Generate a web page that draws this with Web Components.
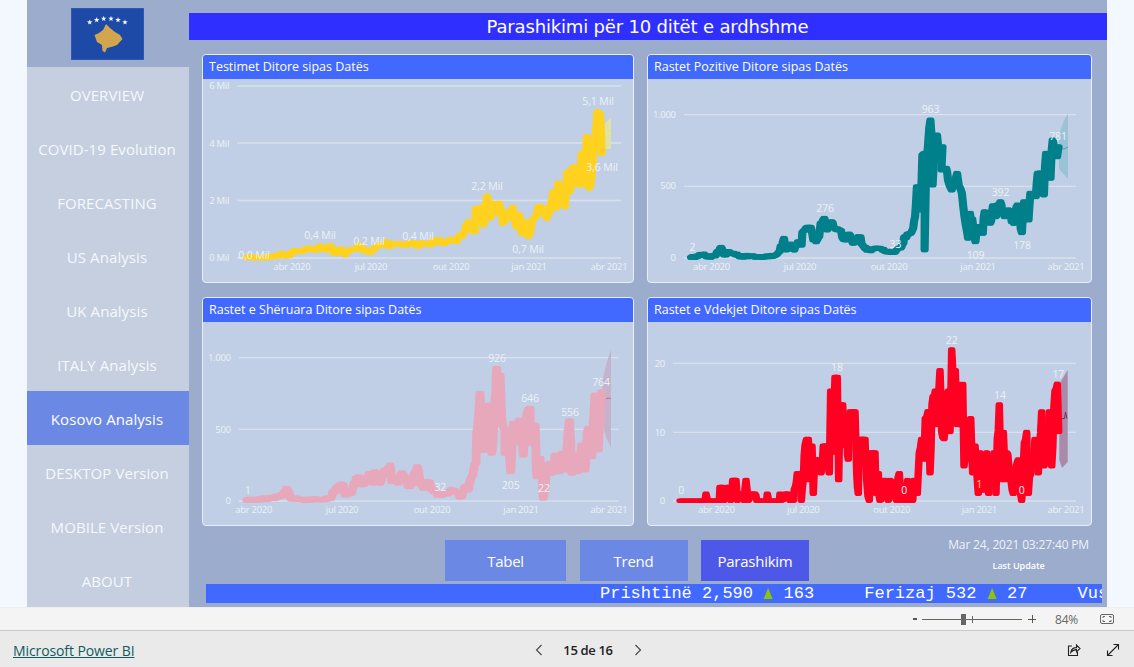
<!DOCTYPE html>
<html lang="sq">
<head>
<meta charset="utf-8">
<title>Parashikimi</title>
<style>
html,body{margin:0;padding:0;width:1134px;height:667px;overflow:hidden;background:#f3f7fe;font-family:"Open Sans","Liberation Sans",sans-serif}
</style>
</head>
<body>
<pbi-viewer>
  <report-page>
    <side-nav>
      <nav-item>OVERVIEW</nav-item>
      <nav-item>COVID-19 Evolution</nav-item>
      <nav-item>FORECASTING</nav-item>
      <nav-item>US Analysis</nav-item>
      <nav-item>UK Analysis</nav-item>
      <nav-item>ITALY Analysis</nav-item>
      <nav-item active>Kosovo Analysis</nav-item>
      <nav-item>DESKTOP Version</nav-item>
      <nav-item>MOBILE Version</nav-item>
      <nav-item>ABOUT</nav-item>
    </side-nav>
    <main-panel>
      <title-bar>Parashikimi për 10 ditët e ardhshme</title-bar>
      <chart-grid>
        <chart-card key="tests">Testimet Ditore sipas Datës</chart-card>
        <chart-card key="pos">Rastet Pozitive Ditore sipas Datës</chart-card>
        <chart-card key="rec">Rastet e Shëruara Ditore sipas Datës</chart-card>
        <chart-card key="dead">Rastet e Vdekjet Ditore sipas Datës</chart-card>
      </chart-grid>
      <action-row>
        <tab-button w="121">Tabel</tab-button>
        <tab-button w="108">Trend</tab-button>
        <tab-button w="108" active>Parashikim</tab-button>
      </action-row>
      <ticker-bar></ticker-bar>
    </main-panel>
  </report-page>
  <zoom-bar></zoom-bar>
  <page-bar></page-bar>
</pbi-viewer>
<script>
function def(name, css, html, setup){
  customElements.define(name, class extends HTMLElement{
    connectedCallback(){
      if(this.shadowRoot) return;
      const r=this.attachShadow({mode:'open'});
      r.innerHTML='<style>'+css+'</style>'+html;
      if(setup) setup.call(this,r);
    }
  });
}
const UI='"Open Sans","Liberation Sans",sans-serif';

def('pbi-viewer',':host{display:flex;flex-direction:column;width:1134px;height:667px}','<slot></slot>');
def('report-page',':host{display:flex;width:1080px;height:607px;margin:0 27px;background:#9bacCC}','<slot></slot>');

def('side-nav',`:host{display:flex;flex-direction:column;width:162px;flex:none}
.logo{height:67px;display:flex;justify-content:center;align-items:flex-start;padding-top:8px;box-sizing:border-box}
.items{flex:1;background:#c5cfe0;display:flex;flex-direction:column}
svg{display:block;margin-right:1px}`,
`<div class="logo"><svg width="73" height="52" viewBox="71 8 73 52">
<rect x="71" y="8" width="73" height="52" fill="#1c4aa6" stroke="#3e66b4" stroke-width="1"/>
<polygon fill="#d2a64f" points="94.5,35 99,33 103,30 106,24 110,28 115,32 120,35 122.500,39 117,45 113,46.500 107,48 105,52.500 102.500,51 102,45 97,42"/>
<g id="stars" fill="#f4f6fb"></g></svg></div>
<div class="items"><slot></slot></div>`,
function(r){
  const g=r.getElementById('stars');let s='';
  [[89.7,22.3],[96.7,20],[103.7,18.7],[111,18.7],[118,20],[125,22.3]].forEach(([x,y])=>{
    let p=[];for(let i=0;i<10;i++){const a=-Math.PI/2+i*Math.PI/5,q=i%2?1.2:2.9;p.push((x+q*Math.cos(a)).toFixed(1)+','+(y+q*Math.sin(a)).toFixed(1));}
    s+='<polygon points="'+p.join(' ')+'"/>';
  });
  g.innerHTML=s;
});

def('nav-item',`:host{display:flex;height:54px;align-items:center;justify-content:center;color:#f6f8fc;font:15px ${UI};letter-spacing:.08px;padding:2px 2px 0 0;box-sizing:border-box}
:host([active]){background:#6b88e4;color:#fff}`,'<slot></slot>');

def('main-panel',':host{display:flex;flex-direction:column;flex:1;min-width:0;padding-top:13px;box-sizing:border-box}','<slot></slot>');

def('title-bar',`:host{display:flex;height:27px;align-items:center;justify-content:center;background:#2f2fff;color:#fff;
font:18px "DejaVu Sans",sans-serif;letter-spacing:-.17px;padding-right:1px;box-sizing:border-box}`,'<slot></slot>');

def('chart-grid',`:host{display:grid;grid-template-columns:432px 445px;grid-template-rows:229px 229px;gap:14px 13px;margin:14px 0 0 13px}`,'<slot></slot>');

const SERIES={
 tests:{box:[202,54,432,229],grid:[[237,621],[86,143,200.5,258]],
  yl:[[229,'6 Mil',86],[229,'4 Mil',143.500],[229,'2 Mil',200.500],[229,'0 Mil',257.500]],
  xl:[[292,'abr 2020'],[371,'jul 2020'],[451,'out 2020'],[529,'jan 2021'],[609,'abr 2021']],xy:267,
  dl:[[254,255,'0,0 Mil'],[320,235.500,'0,4 Mil'],[369,241.500,'0,2 Mil'],[418,236.500,'0,4 Mil'],[487,186,'2,2 Mil'],[528,249.500,'0,7 Mil'],[598,101.500,'5,1 Mil'],[602,167,'3,6 Mil']],
  color:'#ffd21f',w:5,noise:.7,slope:.3,fat:1.5,
  band:{pts:[[603,125],[611,118],[611,149],[603,149]],fill:'#dfe2a6'},line:{pts:[[603,135],[607,133.500],[611,133]],c:'#f3ef5a'},
  traces:[
   {o:[230,170],sx:3,sy:3,p:[[50,262],[120,262],[135,258],[155,250],[170,258],[190,243],[215,245],[235,235],[260,240],[270,228],[285,240],[300,228],[315,250],[335,238],[345,255],[360,240],[380,238],[388,225],[400,240],[415,247],[430,240],[440,228],[465,225],[470,215],[480,230],[495,222],[520,225],[545,218],[560,228],[580,218],[600,225]]},
   {o:[430,100],sx:3,sy:3,p:[[0,430],[25,420],[40,430],[60,418],[80,425],[85,410],[100,405],[105,390],[115,365],[125,390],[135,395],[137,325],[150,345],[155,320],[160,375],[172,288],[180,355],[190,310],[200,340],[208,310],[218,370],[230,335],[240,355],[248,322],[258,380],[268,345],[275,400],[285,365],[295,410],[305,365],[318,350],[325,320],[340,325],[350,355],[360,330],[370,275],[378,325],[385,250],[395,290],[405,320],[412,215],[420,275],[430,200],[445,255],[455,160],[462,255],[470,110],[478,265],[490,160],[497,95],[502,35],[510,40],[515,160]]}
  ]},
 pos:{box:[647,54,445,229],grid:[[684,1076],[114.700,186.300,258]],
  yl:[[675.700,'1.000',114.500],[675.700,'500',186],[675.700,'0',257.500]],
  xl:[[711.500,'abr 2020'],[800,'jul 2020'],[889,'out 2020'],[978,'jan 2021'],[1066,'abr 2021']],xy:267,
  dl:[[692.500,247.500,'2'],[825,208.500,'276'],[895.500,244,'33'],[930.500,109.500,'963'],[975.500,255.500,'109'],[1000.500,192,'392'],[1022,245.500,'178'],[1058,136,'781']],
  color:'#00808a',w:5,noise:.8,slope:.3,fat:1.6,
  band:{pts:[[1059,135],[1064,120],[1068,114],[1068,179],[1059,169]],fill:'#9cc3d5'},line:{pts:[[1059,148],[1064,149],[1068,147]],c:'#4d9fae'},
  traces:[{o:[560,40],sx:2.732,sy:3,p:[[358,652],[375,650],[388,643],[400,650],[425,648],[440,622],[448,645],[460,635],[475,640],[490,650],[520,648],[540,650],[570,650],[590,645],[600,635],[612,595],[618,630],[630,612],[640,630],[650,605],[660,615],[662,578],[675,562],[685,562],[692,600],[700,605],[708,590],[712,550],[722,535],[730,570],[742,545],[750,565],[765,570],[780,600],[790,582],[800,610],[815,590],[830,620],[850,632],[860,625],[875,625],[890,635],[915,637],[925,625],[938,610],[940,592],[955,580],[965,565],[970,530],[975,440],[985,510],[990,345],[997,340],[996,630],[1000,400],[1012,240],[1018,340],[1018,435],[1030,285],[1035,360],[1045,320],[1042,390],[1055,385],[1060,420],[1070,450],[1085,400],[1090,440],[1098,460],[1105,530],[1115,595],[1120,520],[1135,605],[1140,560],[1155,580],[1160,515],[1175,550],[1183,497],[1190,530],[1203,485],[1215,530],[1225,510],[1240,550],[1250,495],[1262,578],[1268,485],[1280,540],[1285,460],[1300,470],[1305,400],[1315,400],[1322,465],[1328,340],[1340,415],[1346,300],[1358,350],[1362,320]]}]},
 rec:{box:[202,297,432,229],grid:[[239,619],[357.700,429.300,501]],
  yl:[[230.700,'1.000',357.500],[230.700,'500',429.500],[230.700,'0',500.500]],
  xl:[[253.700,'abr 2020'],[342,'jul 2020'],[432,'out 2020'],[521,'jan 2021'],[609,'abr 2021']],xy:510,
  dl:[[247.700,490.500,'1'],[440.300,487,'32'],[497,358.500,'926'],[510.700,485,'205'],[544,488,'22'],[530,398.500,'646'],[570,412,'556'],[601,382,'764']],
  color:'#e8a8bc',w:5,noise:.8,slope:.35,fat:2,
  band:{pts:[[602.500,380],[606,365],[611,349.500],[611,448],[606,437],[602.500,425]],fill:'#c4b3cc'},line:{pts:[[603,400],[606,399],[608,398],[611,398.500]],c:'#bd6e96'},
  traces:[{o:[190,290],sx:3,sy:3,p:[[170,630],[200,628],[240,625],[265,620],[280,615],[290,595],[298,610],[305,628],[322,625],[340,630],[400,628],[420,625],[435,600],[460,585],[465,615],[485,610],[490,590],[505,560],[515,585],[525,580],[540,550],[550,580],[555,545],[570,580],[585,540],[600,525],[605,575],[615,565],[625,580],[635,548],[645,560],[655,590],[670,575],[682,530],[690,575],[700,595],[715,575],[725,600],[750,615],[770,610],[790,600],[800,605],[815,620],[825,590],[835,600],[845,560],[858,520],[860,430],[870,310],[875,480],[885,480],[895,345],[905,490],[915,335],[920,235],[925,330],[930,255],[935,390],[945,420],[945,490],[955,450],[962,545],[970,400],[980,450],[988,390],[1000,495],[1010,375],[1020,355],[1022,460],[1035,405],[1040,560],[1050,505],[1060,625],[1070,525],[1080,520],[1085,550],[1098,495],[1108,545],[1115,490],[1125,540],[1138,392],[1145,550],[1150,495],[1160,545],[1175,465],[1185,540],[1195,415],[1205,500],[1215,315],[1225,480],[1235,305],[1230,400]]}]},
 dead:{box:[647,297,445,229],grid:[[673,1076],[363.300,432.300,501]],
  yl:[[665,'20',363.500],[665,'10',432.500],[665,'0',500.500]],
  xl:[[716.300,'abr 2020'],[803.300,'jul 2020'],[891.700,'out 2020'],[979.300,'jan 2021'],[1066,'abr 2021']],xy:510,
  dl:[[681.300,490.500,'0'],[837,367,'18'],[904.300,490.500,'0'],[951.700,340,'22'],[979.300,484,'1','#ffe36a'],[1000,395,'14'],[1021.700,490.500,'0'],[1058.300,374,'17']],
  color:'#ff0022',w:4.500,noise:0,slope:.55,flat:true,fat:1.5,
  band:{pts:[[1059.300,384],[1067.700,370],[1067.700,462],[1062,468],[1059.300,460]],fill:'#a98aa8'},line:{pts:[[1059.300,418.500],[1064.500,418.500],[1065.500,412],[1067,418.500]],c:'#7c2b57'},
  traces:[{o:[640,290],sx:3,sy:3,v:true,p:[[120,0],[195,0],[198,1],[205,0],[238,0],[240,2],[248,2],[252,0],[258,1],[265,2],[272,0],[278,3],[288,3],[292,0],[298,1],[305,1],[312,0],[318,3],[325,0],[332,1],[345,1],[350,0],[380,0],[382,1],[386,0],[418,0],[420,1],[424,0],[436,1],[445,1],[450,0],[460,0],[466,2],[472,4],[480,4],[484,0],[490,3],[495,8],[500,9],[505,9],[508,3],[512,8],[516,8],[520,1],[524,6],[535,6],[543,4],[550,8],[560,8],[568,4],[572,16],[578,7],[585,18],[592,18],[596,3],[600,14],[608,14],[612,8],[620,11],[625,6],[630,13],[645,13],[650,4],[655,1],[658,9],[675,9],[680,3],[688,0],[692,7],[705,7],[708,1],[715,4],[720,0],[738,3],[745,0],[750,3],[770,0],[778,4],[784,0],[788,1],[795,0],[803,3],[808,0],[818,0],[822,3],[832,1],[838,7],[845,9],[852,6],[856,12],[864,13],[870,4],[876,14],[886,16],[892,11],[900,19],[905,10],[912,9],[918,15],[925,16],[930,10],[935,22],[942,12],[946,19],[952,11],[958,17],[962,11],[968,17],[972,5],[978,8],[984,6],[992,12],[998,4],[1005,8],[1015,1],[1020,7],[1028,2],[1040,7],[1046,1],[1052,6],[1058,3],[1062,7],[1068,1],[1072,9],[1078,14],[1084,3],[1090,10],[1095,3],[1100,7],[1110,3],[1120,1],[1125,4],[1135,6],[1145,0],[1150,5],[1160,10],[1165,1],[1175,5],[1185,9],[1195,4],[1205,13],[1212,5],[1220,6],[1228,13],[1235,5],[1245,16],[1252,17],[1256,10]]}]}
};
function rng(seed){let s=seed;return()=>{s=(s*16807)%2147483647;return s/2147483647;};}
function traceToPath(S){
  let pts=[];
  S.traces.forEach(t=>t.p.forEach(([x,y])=>{
    const yy=t.v?632-20.6*y:y;
    pts.push([t.o[0]+x/t.sx,t.o[1]+yy/t.sy]);
  }));
  const r=rng(4711+pts.length),out=[];
  for(let i=0;i<pts.length-1;i++){
    const a=pts[i],b=pts[i+1],dx=b[0]-a[0],dy=b[1]-a[1];
    const n=Math.max(1,Math.round(Math.abs(dx)/1.1));
    const amp=S.noise+Math.min(Math.abs(dy)*S.slope,S.flat?22:14);
    for(let k=0;k<n;k++){
      const f=k/n,edge=Math.min(1,Math.min(k,n-k)/1.5);
      let y=a[1]+dy*f+(k?(r()-.5)*2*amp*edge:0);
      if(S.flat) y=Math.min(y,501);
      out.push([a[0]+dx*f,y]);
    }
  }
  out.push(pts[pts.length-1]);
  return 'M'+out.map(p=>p[0].toFixed(1)+' '+p[1].toFixed(1)).join('L');
}
def('chart-card',`:host{display:flex;flex-direction:column;box-sizing:border-box;border:1px solid #e9eef7;border-radius:4px;background:#c0cfe5;overflow:hidden;min-width:0}
.t{flex:none;height:24px;display:flex;align-items:center;padding:0 0 2px 6px;box-sizing:border-box;background:#4169ff;color:#fff;font:12.500px ${UI}}
svg{flex:1;display:block;min-height:0}
text{font-family:${UI};fill:#edf1f8}
.ax{font-size:9.500px;letter-spacing:-.3px}
.dl{font-size:10.500px;letter-spacing:-.1px}`,
`<div class="t"><slot></slot></div><svg id="s" xmlns="http://www.w3.org/2000/svg"></svg>`,
function(r){
  const S=SERIES[this.getAttribute('key')],[x,y,w,h]=S.box,s=r.getElementById('s');
  const vy=y+25,vh=h-26,vw=w-2;
  s.setAttribute('viewBox',[x+1,vy,vw,vh].join(' '));
  s.setAttribute('width',vw);s.setAttribute('height',vh);
  let o='';
  S.grid[1].forEach(g=>{o+=`<line x1="${S.grid[0][0]}" x2="${S.grid[0][1]}" y1="${g}" y2="${g}" stroke="#d9e0ec" stroke-width="1.300"/>`;});
  S.yl.forEach(l=>{o+=`<text class="ax" x="${l[0]}" y="${l[2]}" dy=".35em" text-anchor="end">${l[1]}</text>`;});
  S.xl.forEach(l=>{o+=`<text class="ax" x="${l[0]}" y="${S.xy}" dy=".35em" text-anchor="middle">${l[1]}</text>`;});
  o+=`<polygon points="${S.band.pts.join(' ')}" fill="${S.band.fill}"/>`;
  o+=`<polyline points="${S.line.pts.join(' ')}" fill="none" stroke="${S.line.c}" stroke-width="1"/>`;
  const d=traceToPath(S);
  [-S.fat,0,S.fat].forEach(dx=>{
    o+=`<path d="${d}" transform="translate(${dx} 0)" fill="none" stroke="${S.color}" stroke-width="${S.w}" stroke-linejoin="round" stroke-linecap="round"/>`;
  });
  S.dl.forEach(l=>{o+=`<text class="dl" x="${l[0]}" y="${l[1]}" dy=".35em" text-anchor="middle"${l[3]?` style="fill:${l[3]}"`:''}>${l[2]}</text>`;});
  s.innerHTML=o;
});

def('action-row',`:host{display:flex;height:41px;margin-top:14px;padding:0 18px 0 256px;gap:13.500px;box-sizing:border-box;position:relative}
.u{margin-left:auto;display:flex;flex-direction:column;align-items:center;color:#eef2f9;margin-top:-3px}
.d{font:12px ${UI};letter-spacing:-.16px;line-height:16px;margin-top:0}
.l{font:600 9px ${UI};line-height:12px;margin-top:7px;color:#fff}`,
`<slot></slot><div class="u"><div class="d">Mar 24, 2021 03:27:40 PM</div><div class="l">Last Update</div></div>`);

def('tab-button',`:host{display:flex;align-items:center;justify-content:center;background:#6b88e4;color:#fff;font:15px ${UI};letter-spacing:-.25px;flex:none}
:host([active]){background:#4e58e8}`,'<slot></slot>',
function(){this.style.width=this.getAttribute('w')+'px';});

def('ticker-bar',`:host{display:block;height:19px;margin:3px 5px 0 17px;background:#4169ff;overflow:hidden;color:#fff;white-space:pre;
font:17px/19px "Liberation Mono",monospace;padding-left:394px;box-sizing:border-box}
svg{display:inline-block;width:10.200px;height:11px;vertical-align:-1px}
i{font-style:normal;margin-left:-1px}`,
`<span>Prishtinë 2,590 <svg viewBox="0 0 10 11"><polygon points="5,0 9.500,11 .5,11" fill="#8fc400"/></svg> 163     <i>Ferizaj 532 <svg viewBox="0 0 10 11"><polygon points="5,0 9.500,11 .5,11" fill="#8fc400"/></svg> 27</i>     <i>Vus</i></span>`);

def('zoom-bar',`:host{display:flex;align-items:center;height:24px;box-sizing:border-box;background:#f4f4f4;border-bottom:1px solid #c9c9c9;border-top:1px solid #eee;position:relative;color:#666;font:12px ${UI}}
.m{margin-left:913px;width:4px;height:2px;background:#555}
.tr{margin-left:5px;width:100px;height:1px;background:#666;position:relative}
.th{position:absolute;left:39px;top:-5px;width:5px;height:11px;background:#666}
.tk{position:absolute;left:50px;top:-3px;width:1px;height:7px;background:#666}
.p{margin-left:6px;width:8px;height:8px;position:relative}
.p:before,.p:after{content:"";position:absolute;background:#555}
.p:before{left:0;right:0;top:3.500px;height:1px}.p:after{top:0;bottom:0;left:3.500px;width:1px}
.z{margin-left:19px;width:31px;letter-spacing:-.2px}
svg{margin-left:14px;display:block}`,
`<div class="m"></div><div class="tr"><div class="th"></div><div class="tk"></div></div><div class="p"></div><div class="z">84%</div>
<svg width="14" height="10" viewBox="0 0 14 10" fill="none" stroke="#666"><rect x=".5" y=".5" width="13" height="9" rx="1.500"/><path d="M3 4V2.500h2M9 2.500h2V4M3 6v1.500h2M9 7.500h2V6"/></svg>`);

def('page-bar',`:host{display:flex;align-items:center;flex:1;background:#eaeaea;position:relative;color:#222;font:14px ${UI};padding-top:2px;box-sizing:border-box}
a{margin-left:13px;color:#0e5c60;text-decoration:underline;font-size:14px;letter-spacing:-.1px;width:500px;flex:none;padding-top:1px}
.pg{display:flex;align-items:center}
.n{width:64px;text-align:center;font-weight:600;font-size:13px;letter-spacing:-.35px;margin:0 13px 0 12px}
.r{margin-left:auto;display:flex;gap:25px;padding-right:14px}
svg{display:block}`,
`<a href="#">Microsoft Power BI</a>
<div class="pg"><svg width="10" height="12" viewBox="0 0 10 12" fill="none" stroke="#444" stroke-width="1.100" style="margin-left:21px"><path d="M7.500 1L2.500 6l5 5"/></svg>
<div class="n">15 de 16</div>
<svg width="10" height="12" viewBox="0 0 10 12" fill="none" stroke="#444" stroke-width="1.100"><path d="M2.500 1l5 5-5 5"/></svg></div>
<div class="r"><svg width="14" height="14" viewBox="0 0 14 14" fill="none" stroke="#222" stroke-width="1.100"><path d="M5 3H1.500v9.500h9V9"/><path d="M3.800 9.500C4.200 6.500 6.500 4.600 9.500 4.600V2L13 5.500 9.500 9V6.600C7 6.600 5.300 7.500 3.800 9.500z"/></svg>
<svg width="14" height="14" viewBox="0 0 14 14" fill="none" stroke="#222" stroke-width="1.100"><path d="M1.500 12.500l11-11M7.500 1.500h5v5M1.500 7.500v5h5"/></svg></div>`);
</script>
</body>
</html>
